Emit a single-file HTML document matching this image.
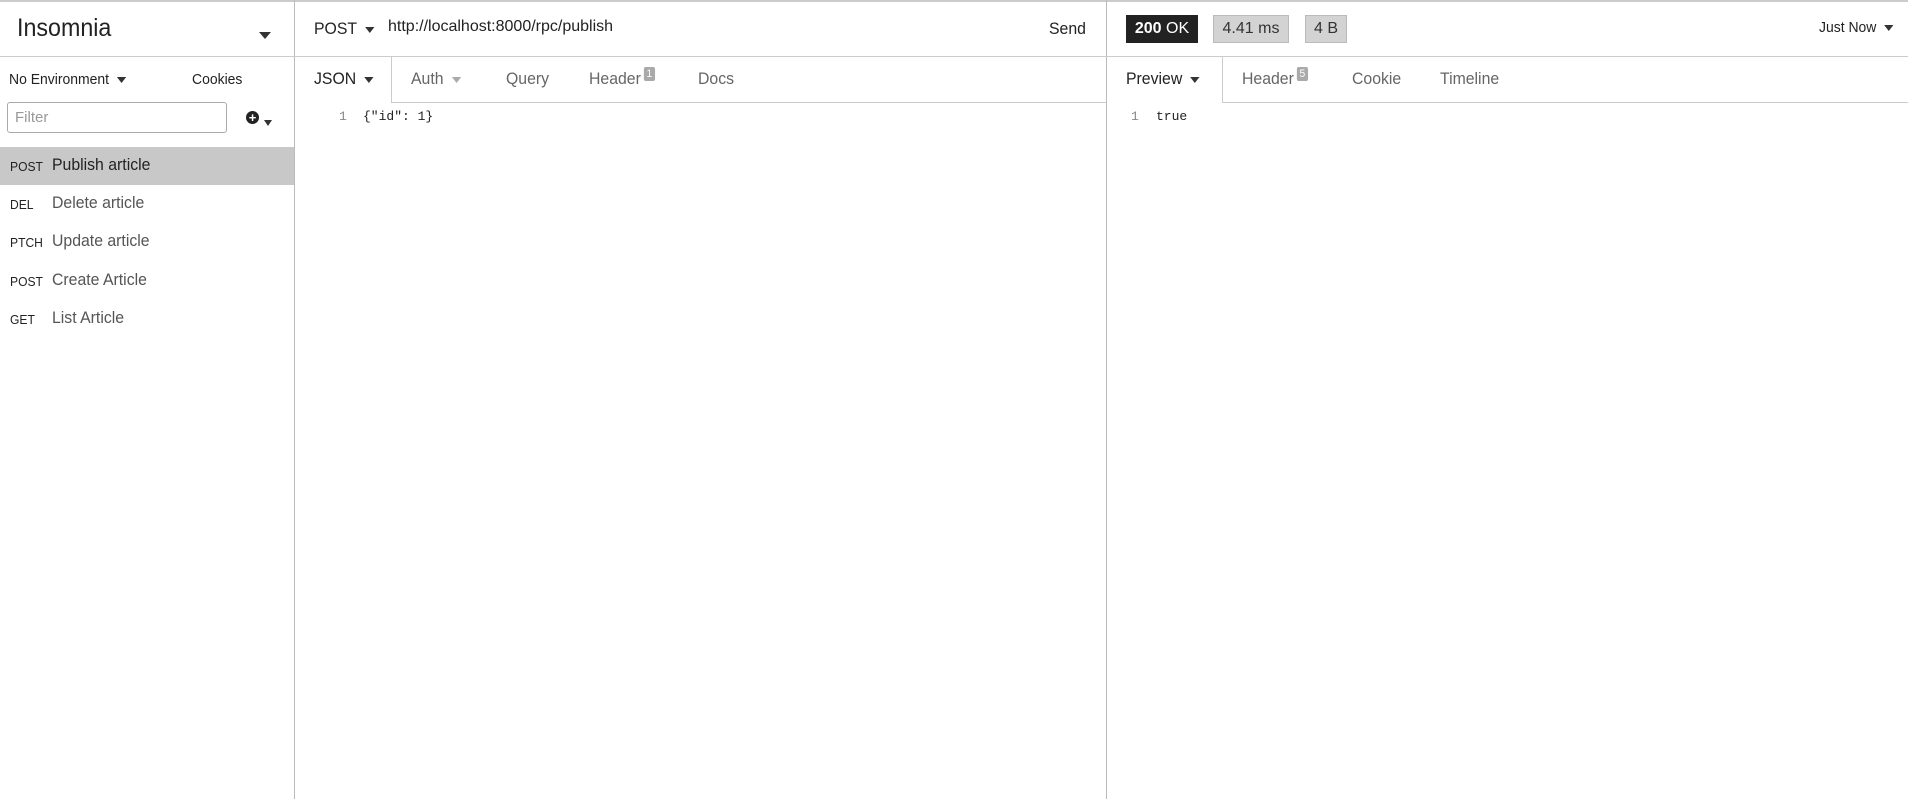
<!DOCTYPE html>
<html><head><meta charset="utf-8"><style>
*{box-sizing:border-box;margin:0;padding:0}
body{width:1908px;height:799px;overflow:hidden;background:#fff;font-family:"Liberation Sans",sans-serif;color:#333;position:relative}
.a{position:absolute;white-space:nowrap}
.n{transform:scaleX(.93);transform-origin:left center}
.line{position:absolute;background:#ddd}
.caret{display:inline-block;width:0;height:0;border-left:5px solid transparent;border-right:5px solid transparent;border-top:6px solid #333;vertical-align:middle}
.mono{font-family:"Liberation Mono",monospace}
.badge{display:inline-block;background:#aaa;color:#fff;font-size:11px;padding:0 3px;border-radius:2px;vertical-align:top;margin-left:3px;line-height:14px;margin-top:-2px}
</style></head><body>
<div class="line" style="left:0;top:0;width:1908px;height:2px;background:#ccc"></div>
<div class="line" style="left:294px;top:0;width:1px;height:799px;background:#bbb"></div>
<div class="line" style="left:1106px;top:0;width:1px;height:799px;background:#bbb"></div>
<div class="line" style="left:0;top:56px;width:1908px;height:1px;background:#ccc"></div>

<div class="a n" style="left:17px;top:14px;font-size:25px;color:#222">Insomnia</div>
<div class="a" style="left:259px;top:27px"><span class="caret" style="border-width:7px 6px 0 6px"></span></div>

<div class="a n" style="left:9px;top:71px;font-size:15px;color:#222">No Environment <span class="caret" style="margin-left:4px"></span></div>
<div class="a n" style="left:192px;top:71px;font-size:15px;color:#222">Cookies</div>
<div class="a" style="left:7px;top:102px;width:220px;height:31px;border:1px solid #aaa;border-radius:3px;font-size:15px;color:#999;padding:6px 7px">Filter</div>
<div class="a" style="left:246px;top:111px;width:13px;height:13px;border-radius:50%;background:#222;color:#fff;font-size:13px;line-height:13px;text-align:center;font-weight:bold">+</div>
<div class="a" style="left:264px;top:114px"><span class="caret" style="border-width:6px 4px 0 4px"></span></div>

<div class="a" style="left:0;top:147px;width:294px;height:38px;background:#c8c8c8"></div>
<div class="a n" style="left:10px;top:159px;font-size:13px;color:#222">POST</div><div class="a n" style="left:52px;top:155px;font-size:17px;color:#222">Publish article</div>
<div class="a n" style="left:10px;top:197px;font-size:13px;color:#222">DEL</div><div class="a n" style="left:52px;top:193px;font-size:17px;color:#555">Delete article</div>
<div class="a n" style="left:10px;top:235px;font-size:13px;color:#222">PTCH</div><div class="a n" style="left:52px;top:231px;font-size:17px;color:#555">Update article</div>
<div class="a n" style="left:10px;top:274px;font-size:13px;color:#222">POST</div><div class="a n" style="left:52px;top:270px;font-size:17px;color:#555">Create Article</div>
<div class="a n" style="left:10px;top:312px;font-size:13px;color:#222">GET</div><div class="a n" style="left:52px;top:308px;font-size:17px;color:#555">List Article</div>

<div class="a n" style="left:314px;top:19px;font-size:17px;color:#222">POST <span class="caret" style="margin-left:4px"></span></div>
<div class="a" style="left:388px;top:18px;font-size:16px;color:#222">http://localhost:8000/rpc/publish</div>
<div class="a n" style="left:1049px;top:19px;font-size:17px;color:#222">Send</div>

<div class="line" style="left:391px;top:102px;width:715px;height:1px;background:#ccc"></div>
<div class="line" style="left:391px;top:57px;width:1px;height:46px;background:#ccc"></div>
<div class="a n" style="left:314px;top:69px;font-size:17px;color:#222">JSON <span class="caret" style="margin-left:4px"></span></div>
<div class="a n" style="left:411px;top:69px;font-size:17px;color:#666">Auth <span class="caret" style="margin-left:4px;border-top-color:#aaa"></span></div>
<div class="a n" style="left:506px;top:69px;font-size:17px;color:#666">Query</div>
<div class="a n" style="left:589px;top:69px;font-size:17px;color:#666">Header<span class="badge">1</span></div>
<div class="a n" style="left:698px;top:69px;font-size:17px;color:#666">Docs</div>
<div class="a mono" style="left:339px;top:109px;font-size:13px;color:#888">1</div>
<div class="a mono" style="left:363px;top:109px;font-size:13px;color:#222">{"id": 1}</div>

<div class="a" style="left:1126px;top:15px;width:72px;height:28px;background:#222;color:#fff;font-size:16px;line-height:28px;text-align:center"><b>200</b> OK</div>
<div class="a" style="left:1213px;top:15px;width:76px;height:28px;background:#d3d3d3;border:1px solid #bbb;color:#333;font-size:16px;line-height:26px;text-align:center">4.41 ms</div>
<div class="a" style="left:1305px;top:15px;width:42px;height:28px;background:#d3d3d3;border:1px solid #bbb;color:#333;font-size:16px;line-height:26px;text-align:center">4 B</div>
<div class="a n" style="left:1819px;top:19px;font-size:15px;color:#222">Just Now <span class="caret" style="margin-left:4px"></span></div>

<div class="line" style="left:1222px;top:102px;width:686px;height:1px;background:#ccc"></div>
<div class="line" style="left:1222px;top:57px;width:1px;height:46px;background:#ccc"></div>
<div class="a n" style="left:1126px;top:69px;font-size:17px;color:#222">Preview <span class="caret" style="margin-left:4px"></span></div>
<div class="a n" style="left:1242px;top:69px;font-size:17px;color:#666">Header<span class="badge">5</span></div>
<div class="a n" style="left:1352px;top:69px;font-size:17px;color:#666">Cookie</div>
<div class="a n" style="left:1440px;top:69px;font-size:17px;color:#666">Timeline</div>
<div class="a mono" style="left:1131px;top:109px;font-size:13px;color:#888">1</div>
<div class="a mono" style="left:1156px;top:109px;font-size:13px;color:#222">true</div>
</body></html>
